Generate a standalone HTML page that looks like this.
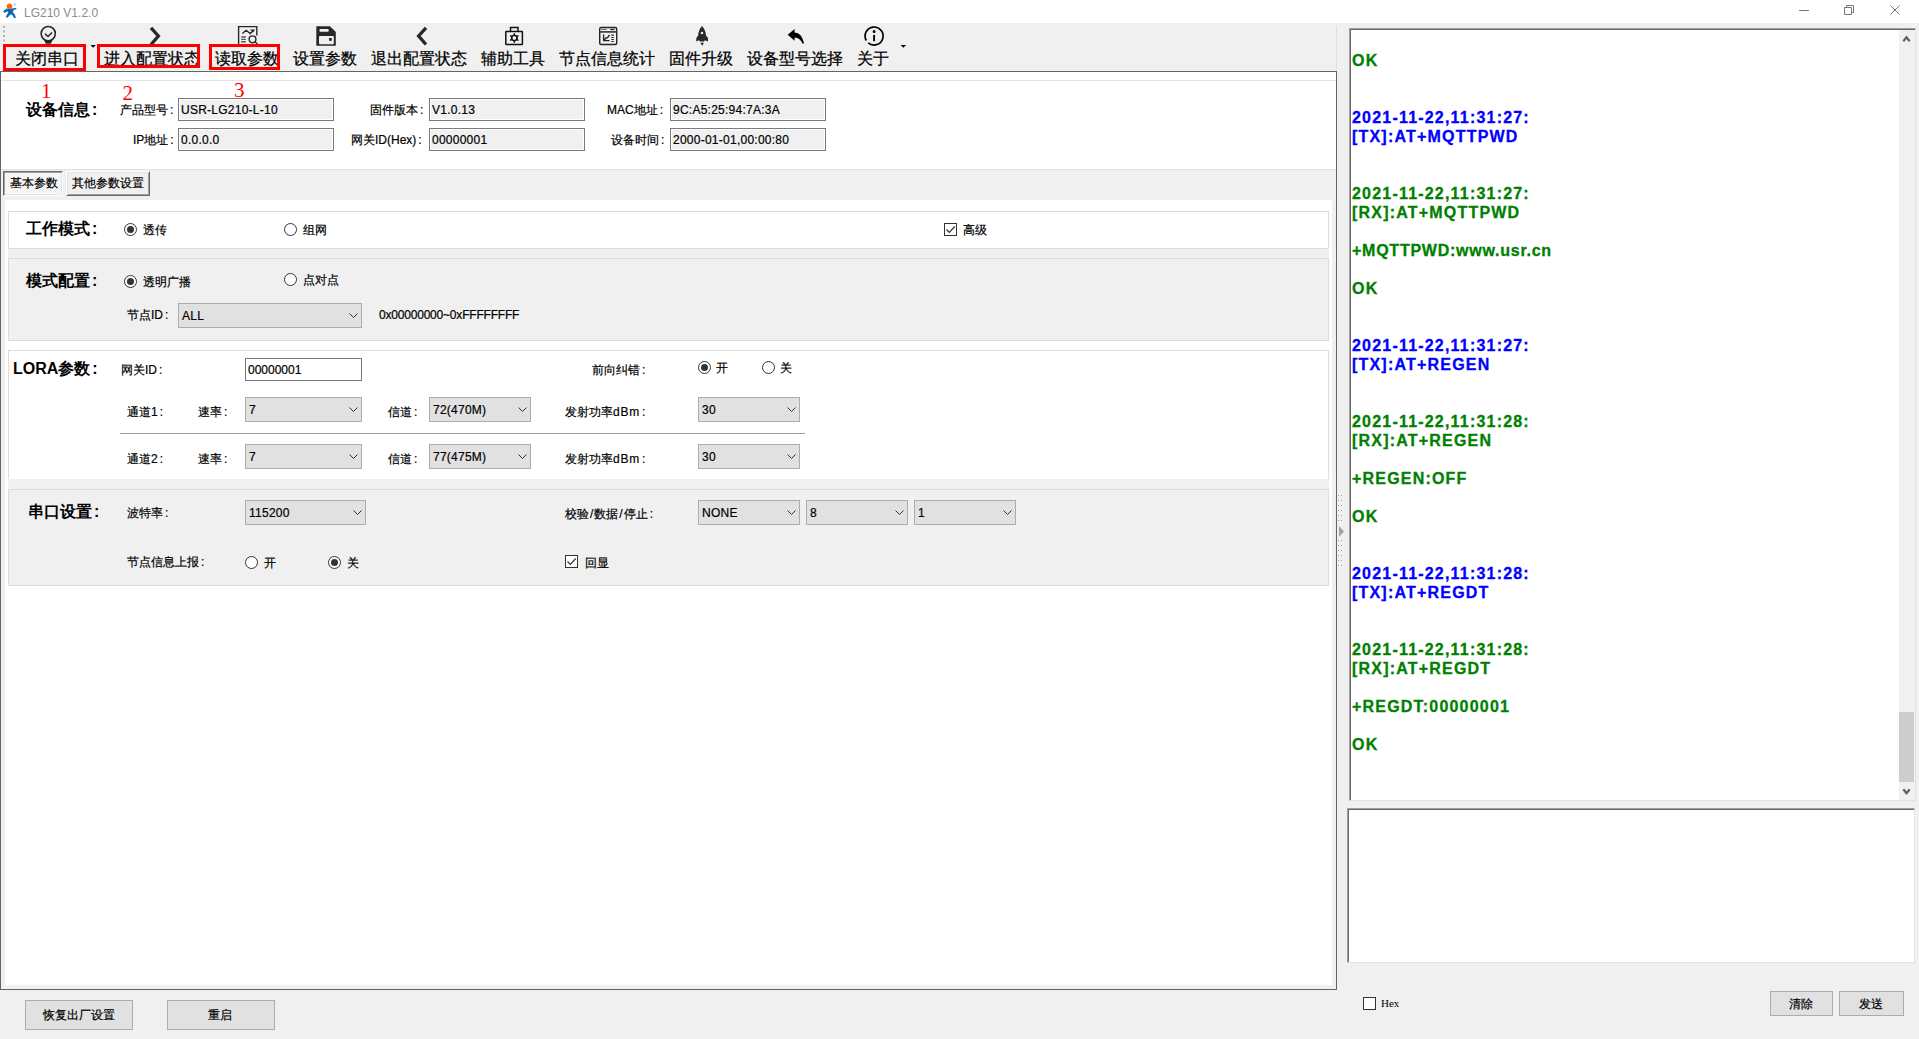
<!DOCTYPE html>
<html><head><meta charset="utf-8">
<style>
*{box-sizing:border-box;margin:0;padding:0}
html,body{width:1919px;height:1039px;overflow:hidden;background:#f0f0f0;font-family:"Liberation Sans",sans-serif;font-size:12px;color:#000;position:relative}
.a{position:absolute}
.t{position:absolute;white-space:nowrap;line-height:14px;font-size:12px;-webkit-text-stroke:0.2px #000}
.tb{position:absolute;white-space:nowrap;line-height:18px;font-size:16px;-webkit-text-stroke:0.25px #000}
.b{position:absolute;white-space:nowrap;font-weight:bold;font-size:16px;line-height:18px}
.rd{position:absolute;width:13px;height:13px;border:1px solid #333;border-radius:50%;background:#fff}
.rd.on::after{content:"";position:absolute;left:2px;top:2px;width:7px;height:7px;border-radius:50%;background:#333}
.ck{position:absolute;width:13px;height:13px;border:1px solid #333;background:#fff}
.ro{position:absolute;height:23px;border:1px solid #7a7a7a;background:#f0f0f0;box-shadow:inset 0 0 0 1px #fff}
.ro span{position:absolute;left:2px;top:4px;letter-spacing:0.25px;line-height:14px;font-size:12px;white-space:nowrap;-webkit-text-stroke:0.2px #000}
.cb{position:absolute;height:25px;border:1px solid #adadad;background:#e1e1e1}
.cb span{position:absolute;left:3px;top:5px;letter-spacing:0.25px;line-height:14px;font-size:12px;white-space:nowrap;-webkit-text-stroke:0.2px #000}
.cb svg{position:absolute;right:3px;top:9px}
.btn{position:absolute;border:1px solid #adadad;background:#e1e1e1;text-align:center}
.red{position:absolute;border:3px solid #f00}
.log{position:absolute;left:1352px;font-weight:bold;font-size:16px;line-height:19px;letter-spacing:1.2px;white-space:nowrap;-webkit-text-stroke:0.3px currentColor}
.c{font-style:normal;margin-left:2px}
.g{color:#008000}.bl{color:#0000ff}
</style></head><body>
<!-- title bar -->
<div class="a" style="left:0;top:0;width:1919px;height:23px;background:#fff"></div>
<svg class="a" style="left:0;top:0" width="22" height="22" viewBox="0 0 22 22">
<path d="M6.3 9.2 L12.8 8.9 L16 8.5 L16.2 8.6 L12.9 9.6 L12.6 12.6 Q14.8 14 15.3 17.6 L14.2 17.6 Q13.6 15 11.2 13.8 Q9 14.4 7.4 17.3 L6.5 17 Q7.3 14 8.8 12.6 L7.5 10.8 L4.3 12.4 L3.7 11.4 Z" fill="#0066b3" stroke="#0066b3" stroke-width="1" stroke-linejoin="round"/>
<circle cx="9.5" cy="6.35" r="2.75" fill="#ff6600"/>
<circle cx="14.8" cy="4.45" r="1.1" fill="#a8cbe8"/>
</svg>
<div class="t" style="left:24px;top:5.5px;color:#8c8c8c;-webkit-text-stroke:0">LG210 V1.2.0</div>
<svg class="a" style="left:1797px;top:4px" width="112" height="12" viewBox="0 0 112 12">
<path d="M2 6.5 H12" stroke="#777" stroke-width="1"/>
<path d="M47.5 3.5 h7 v7 h-7z M49.5 3.5 v-2 h7 v7 h-2" stroke="#777" stroke-width="1" fill="none"/>
<path d="M93.5 1.5 L102.5 10.5 M102.5 1.5 L93.5 10.5" stroke="#777" stroke-width="1"/>
</svg>

<!-- toolbar -->
<div id="toolbar">
<svg class="a" style="left:0;top:23px" width="920" height="48" viewBox="0 23 920 48">
<!-- grip -->
<g fill="#b4b4b4"><rect x="3" y="26" width="2" height="2"/><rect x="3" y="30.5" width="2" height="2"/><rect x="3" y="35" width="2" height="2"/><rect x="3" y="39.5" width="2" height="2"/></g>
<!-- icon1 pin check -->
<g transform="translate(36,23)" fill="none" stroke="#282828">
<circle cx="12.25" cy="10.6" r="7.1" stroke-width="1.6"/>
<path d="M9 10.9 L12 13.5 L16.1 9.5" stroke-width="1.6"/>
<path d="M7.2 15.6 Q12.2 19.8 17.4 15.6 L14.8 20.8 L9.8 20.8 Z" fill="#282828" stroke="none"/>
</g>
<!-- icon2 > -->
<path d="M151 27.8 L158.4 36 L151 44.5" fill="none" stroke="#282828" stroke-width="3.3"/>
<!-- icon3 report -->
<g transform="translate(234,23)" fill="none" stroke="#282828" stroke-width="1.4">
<path d="M4.6 21 V3.6 H22.8 V12.6"/>
<path d="M8.3 10.5 L12.2 7.3 L16.2 10.5 L19.5 7.5" />
<path d="M16.5 7.2 H20 L18.8 9" stroke-width="1.2"/>
<path d="M7.2 14 H11.8 M7.2 16.4 H11.8 M7.2 18.8 H11.8" stroke="#555"/>
<circle cx="18.5" cy="16.3" r="3.4"/>
<path d="M20.9 18.7 L23.5 21"/>
</g>
<!-- icon4 save -->
<g transform="translate(313,23)">
<path d="M3.3 3.2 H17 L22.8 9 V22.8 H3.3 Z" fill="#282828"/>
<rect x="6.5" y="6" width="9.2" height="2.8" rx="1" fill="#f0f0f0"/>
<rect x="6" y="13" width="14.8" height="8.3" rx="1" fill="#f0f0f0"/>
<rect x="16" y="15" width="2.8" height="2.8" fill="#282828"/>
</g>
<!-- icon5 < -->
<path d="M426 27.8 L418.6 36 L426 44.5" fill="none" stroke="#282828" stroke-width="3.3"/>
<!-- icon6 toolbox -->
<g transform="translate(500,23)" fill="none" stroke="#111" stroke-width="1.5">
<rect x="5.8" y="8.5" width="16.6" height="13" rx="0.5"/>
<path d="M10.5 8.3 V4.6 H18 V8.3"/>
<circle cx="14.3" cy="15" r="2.6" stroke-width="1.4"/>
<path d="M14.3 10.3 L15.2 12.6 L13.4 12.6 Z M14.3 19.7 L15.2 17.4 L13.4 17.4 Z M10.2 12.6 L12.6 13.2 L11.6 14.8 Z M18.4 12.6 L16 13.2 L17 14.8 Z M10.2 17.4 L12.6 16.8 L11.6 15.2 Z M18.4 17.4 L16 16.8 L17 15.2 Z" fill="#111" stroke-width="0.8"/>
</g>
<!-- icon7 stats -->
<g transform="translate(595,23)" fill="none" stroke="#222" stroke-width="1.4">
<rect x="4.7" y="4.5" width="17" height="17" rx="1.5"/>
<path d="M4.7 8.9 H21.7" stroke-width="1.8" stroke="#444"/>
<path d="M6.3 6.5 H11.5" stroke="#666" stroke-width="1"/>
<path d="M15.2 6.5 H19.6" stroke-width="1.2"/>
<path d="M8.6 11.6 V17.6 H14.6" stroke-width="1.3"/>
<path d="M8.6 17.6 L11 15 L12.6 14.6 L14.6 11.8" stroke-width="1.4"/>
<path d="M16.3 12.2 H18.8 M16.3 14.5 H18.8 M16.3 16.5 H18.8 M16.3 18.5 H18.8" stroke-width="1.2"/>
</g>
<!-- icon8 rocket -->
<g transform="translate(689,23)" fill="#282828">
<path d="M13 3 Q16.8 7 16.9 12.5 L19 15 L19 18.5 L16 17.2 L15 18.6 H11 L10 17.2 L7.3 18.5 L7.3 15 L9.2 12.5 Q9.3 7 13 3 Z"/>
<circle cx="13" cy="10" r="1.3" fill="#f0f0f0"/>
<path d="M11.3 19.8 H14.9 L13.2 22.8 Z"/>
</g>
<!-- icon9 reply -->
<g transform="translate(783,23)" fill="#000">
<path d="M4.7 11.8 L11.6 5.9 V9.4 Q18.8 9.7 20.9 19.8 Q20.8 21 19.7 20.7 Q17.2 14.8 11.6 14.4 V17.8 Z"/>
</g>
<!-- icon10 info -->
<g transform="translate(861,23)" fill="none" stroke="#000" stroke-width="1.7">
<path d="M5.3 17.5 A9 9 0 1 1 7.2 19.8"/>
<circle cx="13.1" cy="8.5" r="0.6" stroke-width="1.8"/>
<path d="M13.1 11.9 V18.2" stroke-width="1.9"/>
</g>
<path d="M900.7 45 H906 L903.35 47.8 Z" fill="#000"/>
<path d="M90.5 45 H95.8 L93.15 47.8 Z" fill="#000"/>
<line x1="0" y1="71.5" x2="1337" y2="71.5" stroke="#646464"/>
</svg>
<div class="tb" style="left:15px;top:49.5px">关闭串口</div>
<div class="tb" style="left:104px;top:49.5px">进入配置状态</div>
<div class="tb" style="left:215px;top:49.5px">读取参数</div>
<div class="tb" style="left:293px;top:49.5px">设置参数</div>
<div class="tb" style="left:371px;top:49.5px">退出配置状态</div>
<div class="tb" style="left:481px;top:49.5px">辅助工具</div>
<div class="tb" style="left:559px;top:49.5px">节点信息统计</div>
<div class="tb" style="left:669px;top:49.5px">固件升级</div>
<div class="tb" style="left:747px;top:49.5px">设备型号选择</div>
<div class="tb" style="left:857px;top:49.5px">关于</div>
<div class="red" style="left:3px;top:44px;width:83px;height:27px"></div>
<div class="red" style="left:97px;top:44px;width:103px;height:24px"></div>
<div class="red" style="left:209px;top:44px;width:71px;height:26px"></div>
</div>

<div class="a" style="left:1336px;top:26px;width:1px;height:45px;background:#dedede"></div>
<!-- left panel -->
<div class="a" style="left:0;top:71px;width:1337px;height:919px;border:1px solid #646464;background:#fff"></div>
<div class="a" style="left:1px;top:80px;width:1335px;height:1px;background:#e3e3e3"></div>
<div class="a" style="left:1px;top:169px;width:1335px;height:820px;background:#f0f0f0;border-top:1px solid #e3e3e3"></div>
<div class="a" style="left:5px;top:200px;width:1327px;height:785px;background:#fff"></div>
<!-- red numbers -->
<div class="a" style="left:41px;top:81px;font-family:'Liberation Serif',serif;font-size:21px;line-height:20px;color:#f00">1</div>
<div class="a" style="left:122.5px;top:83px;font-family:'Liberation Serif',serif;font-size:21px;line-height:20px;color:#f00">2</div>
<div class="a" style="left:234px;top:79.5px;font-family:'Liberation Serif',serif;font-size:21px;line-height:20px;color:#f00">3</div>
<!-- device info -->
<div class="b" style="left:26px;top:101px">设备信息<i class="c">:</i></div>
<div class="t" style="left:120px;top:103px">产品型号<i class="c">:</i></div>
<div class="ro" style="left:178px;top:98px;width:156px"><span>USR-LG210-L-10</span></div>
<div class="t" style="left:133px;top:133px">IP地址<i class="c">:</i></div>
<div class="ro" style="left:178px;top:128px;width:156px"><span>0.0.0.0</span></div>
<div class="t" style="left:370px;top:103px">固件版本<i class="c">:</i></div>
<div class="ro" style="left:429px;top:98px;width:156px"><span>V1.0.13</span></div>
<div class="t" style="left:351px;top:133px">网关ID(Hex)<i class="c">:</i></div>
<div class="ro" style="left:429px;top:128px;width:156px"><span>00000001</span></div>
<div class="t" style="left:607px;top:103px">MAC地址<i class="c">:</i></div>
<div class="ro" style="left:670px;top:98px;width:156px"><span>9C:A5:25:94:7A:3A</span></div>
<div class="t" style="left:611px;top:133px">设备时间<i class="c">:</i></div>
<div class="ro" style="left:670px;top:128px;width:156px"><span>2000-01-01,00:00:80</span></div>
<!-- tabs -->
<div class="a" style="left:3px;top:171px;width:60px;height:25px;border-top:1px solid #696969;border-left:1px solid #696969;border-right:1px solid #fff;border-bottom:1px solid #fff;box-shadow:inset 1px 1px 0 #a0a0a0,inset -1px -1px 0 #e3e3e3;background:repeating-conic-gradient(#fff 0 25%,#ececec 0 50%) 0 0/2px 2px"></div>
<div class="t" style="left:10px;top:176px">基本参数</div>
<div class="a" style="left:66px;top:171px;width:84px;height:25px;border-top:1px solid #fff;border-left:1px solid #fff;border-right:1px solid #696969;border-bottom:1px solid #696969;box-shadow:inset 1px 1px 0 #e3e3e3,inset -1px -1px 0 #a0a0a0;background:#f0f0f0"></div>
<div class="t" style="left:72px;top:176px">其他参数设置</div>
<!-- sec1 -->
<div class="a" style="left:8px;top:211px;width:1321px;height:38px;border:1px solid #dcdcdc;background:#fff"></div>
<div class="b" style="left:26px;top:220px">工作模式<i class="c">:</i></div>
<div class="rd on" style="left:124px;top:223px"></div><div class="t" style="left:143px;top:223px">透传</div>
<div class="rd" style="left:284px;top:223px"></div><div class="t" style="left:303px;top:223px">组网</div>
<div class="ck" style="left:944px;top:223px"><svg width="11" height="11" style="position:absolute;left:0;top:0"><path d="M1.5 5.5 L4.3 8.3 L9.8 2.5" stroke="#333" stroke-width="1.2" fill="none"/></svg></div><div class="t" style="left:963px;top:223px">高级</div>
<!-- sec2 -->
<div class="a" style="left:8px;top:249px;width:1321px;height:92px;background:#f0f0f0"></div>
<div class="a" style="left:8px;top:258px;width:1321px;height:83px;border:1px solid #dcdcdc;background:#f0f0f0"></div>
<div class="b" style="left:26px;top:272px">模式配置<i class="c">:</i></div>
<div class="rd on" style="left:124px;top:275px"></div><div class="t" style="left:143px;top:275px">透明广播</div>
<div class="rd" style="left:284px;top:273px"></div><div class="t" style="left:303px;top:273px">点对点</div>
<div class="t" style="left:127px;top:308px">节点ID<i class="c">:</i></div>
<div class="cb" style="left:178px;top:303px;width:184px"><span>ALL</span><svg width="9" height="6"><path d="M0.5 0.5 L4.5 4.5 L8.5 0.5" stroke="#333" fill="none"/></svg></div>
<div class="t" style="left:379px;top:308px;letter-spacing:-0.2px">0x00000000~0xFFFFFFFF</div>
<!-- sec3 LORA -->
<div class="a" style="left:8px;top:350px;width:1321px;height:130px;border:1px solid #dcdcdc;background:#fff"></div>
<div class="b" style="left:13px;top:360px">LORA参数<i class="c">:</i></div>
<div class="t" style="left:121px;top:363px">网关ID<i class="c">:</i></div>
<div class="a" style="left:245px;top:358px;width:117px;height:23px;border:1px solid #7a7a7a;background:#fff"><span class="t" style="left:2px;top:4px">00000001</span></div>
<div class="t" style="left:592px;top:363px">前向纠错<i class="c">:</i></div>
<div class="rd on" style="left:698px;top:361px"></div><div class="t" style="left:716px;top:361px">开</div>
<div class="rd" style="left:762px;top:361px"></div><div class="t" style="left:780px;top:361px">关</div>
<div class="t" style="left:127px;top:405px">通道1<i class="c">:</i></div>
<div class="t" style="left:198px;top:405px">速率<i class="c">:</i></div>
<div class="cb" style="left:245px;top:397px;width:117px"><span>7</span><svg width="9" height="6"><path d="M0.5 0.5 L4.5 4.5 L8.5 0.5" stroke="#333" fill="none"/></svg></div>
<div class="t" style="left:388px;top:405px">信道<i class="c">:</i></div>
<div class="cb" style="left:429px;top:397px;width:102px"><span>72(470M)</span><svg width="9" height="6"><path d="M0.5 0.5 L4.5 4.5 L8.5 0.5" stroke="#333" fill="none"/></svg></div>
<div class="t" style="left:565px;top:405px">发射功率<span style="letter-spacing:0.8px">dBm</span><i class="c">:</i></div>
<div class="cb" style="left:698px;top:397px;width:102px"><span>30</span><svg width="9" height="6"><path d="M0.5 0.5 L4.5 4.5 L8.5 0.5" stroke="#333" fill="none"/></svg></div>
<div class="a" style="left:120px;top:433px;width:685px;height:1px;background:#a0a0a0"></div>
<div class="t" style="left:127px;top:452px">通道2<i class="c">:</i></div>
<div class="t" style="left:198px;top:452px">速率<i class="c">:</i></div>
<div class="cb" style="left:245px;top:444px;width:117px"><span>7</span><svg width="9" height="6"><path d="M0.5 0.5 L4.5 4.5 L8.5 0.5" stroke="#333" fill="none"/></svg></div>
<div class="t" style="left:388px;top:452px">信道<i class="c">:</i></div>
<div class="cb" style="left:429px;top:444px;width:102px"><span>77(475M)</span><svg width="9" height="6"><path d="M0.5 0.5 L4.5 4.5 L8.5 0.5" stroke="#333" fill="none"/></svg></div>
<div class="t" style="left:565px;top:452px">发射功率<span style="letter-spacing:0.8px">dBm</span><i class="c">:</i></div>
<div class="cb" style="left:698px;top:444px;width:102px"><span>30</span><svg width="9" height="6"><path d="M0.5 0.5 L4.5 4.5 L8.5 0.5" stroke="#333" fill="none"/></svg></div>
<!-- sec4 serial -->
<div class="a" style="left:8px;top:479px;width:1321px;height:107px;background:#f0f0f0"></div>
<div class="a" style="left:8px;top:489px;width:1321px;height:97px;border:1px solid #dcdcdc;background:#f0f0f0"></div>
<div class="b" style="left:28px;top:503px">串口设置<i class="c">:</i></div>
<div class="t" style="left:127px;top:506px">波特率<i class="c">:</i></div>
<div class="cb" style="left:245px;top:500px;width:121px"><span>115200</span><svg width="9" height="6"><path d="M0.5 0.5 L4.5 4.5 L8.5 0.5" stroke="#333" fill="none"/></svg></div>
<div class="t" style="left:565px;top:507px">校验<span style="margin:0 1px">/</span>数据<span style="margin:0 1px">/</span>停止<i class="c">:</i></div>
<div class="cb" style="left:698px;top:500px;width:102px"><span>NONE</span><svg width="9" height="6"><path d="M0.5 0.5 L4.5 4.5 L8.5 0.5" stroke="#333" fill="none"/></svg></div>
<div class="cb" style="left:806px;top:500px;width:102px"><span>8</span><svg width="9" height="6"><path d="M0.5 0.5 L4.5 4.5 L8.5 0.5" stroke="#333" fill="none"/></svg></div>
<div class="cb" style="left:914px;top:500px;width:102px"><span>1</span><svg width="9" height="6"><path d="M0.5 0.5 L4.5 4.5 L8.5 0.5" stroke="#333" fill="none"/></svg></div>
<div class="t" style="left:127px;top:555px">节点信息上报<i class="c">:</i></div>
<div class="rd" style="left:245px;top:556px"></div><div class="t" style="left:264px;top:556px">开</div>
<div class="rd on" style="left:328px;top:556px"></div><div class="t" style="left:347px;top:556px">关</div>
<div class="ck" style="left:565px;top:555px"><svg width="11" height="11" style="position:absolute;left:0;top:0"><path d="M1.5 5.5 L4.3 8.3 L9.8 2.5" stroke="#333" stroke-width="1.2" fill="none"/></svg></div><div class="t" style="left:585px;top:556px">回显</div>
<!-- splitter -->
<svg class="a" style="left:1337px;top:490px" width="10" height="80" viewBox="0 0 10 80">
<g fill="#a0a0a0">
<rect x="1" y="5" width="1" height="1"/><rect x="4" y="5" width="1" height="1"/>
<rect x="1" y="10" width="1" height="1"/><rect x="4" y="10" width="1" height="1"/>
<rect x="1" y="15" width="1" height="1"/><rect x="4" y="15" width="1" height="1"/>
<rect x="1" y="20" width="1" height="1"/><rect x="4" y="20" width="1" height="1"/>
<rect x="1" y="25" width="1" height="1"/><rect x="4" y="25" width="1" height="1"/>
<rect x="1" y="30" width="1" height="1"/><rect x="4" y="30" width="1" height="1"/>
<path d="M2 36 L7 41.5 L2 47 Z"/>
<rect x="1" y="50" width="1" height="1"/><rect x="4" y="50" width="1" height="1"/>
<rect x="1" y="55" width="1" height="1"/><rect x="4" y="55" width="1" height="1"/>
<rect x="1" y="60" width="1" height="1"/><rect x="4" y="60" width="1" height="1"/>
<rect x="1" y="65" width="1" height="1"/><rect x="4" y="65" width="1" height="1"/>
<rect x="1" y="70" width="1" height="1"/><rect x="4" y="70" width="1" height="1"/>
<rect x="1" y="75" width="1" height="1"/><rect x="4" y="75" width="1" height="1"/>
</g></svg>
<!-- bottom buttons -->
<div class="btn" style="left:25px;top:1000px;width:108px;height:30px"><span class="t" style="left:17px;top:7px">恢复出厂设置</span></div>
<div class="btn" style="left:167px;top:1000px;width:108px;height:30px"><span class="t" style="left:40px;top:7px">重启</span></div>

<!-- right panel -->
<div class="a" style="left:1349px;top:28px;width:567px;height:773px;background:#fff;border-top:1px solid #a0a0a0;border-left:1px solid #a0a0a0;border-right:1px solid #e3e3e3;border-bottom:1px solid #e3e3e3;box-shadow:inset 1px 1px 0 #696969"></div>
<div class="a" style="left:1899px;top:30px;width:16px;height:770px;background:#f0f0f0"></div>
<div class="a" style="left:1899px;top:712px;width:15px;height:70px;background:#cdcdcd"></div>
<svg class="a" style="left:1899px;top:30px" width="16" height="770" viewBox="0 0 16 770">
<path d="M4.3 11.3 L7.5 7.3 L10.7 11.3" stroke="#606060" stroke-width="2.2" fill="none"/>
<path d="M4.3 759.3 L7.5 763.3 L10.7 759.3" stroke="#606060" stroke-width="2.2" fill="none"/>
</svg>
<div class="log g" style="top:50.5px">OK</div>
<div class="log bl" style="top:107.5px">2021-11-22,11:31:27:</div>
<div class="log bl" style="top:126.5px">[TX]:AT+MQTTPWD</div>
<div class="log g" style="top:183.5px">2021-11-22,11:31:27:</div>
<div class="log g" style="top:202.5px">[RX]:AT+MQTTPWD</div>
<div class="log g" style="top:240.5px;letter-spacing:0.75px">+MQTTPWD:www.usr.cn</div>
<div class="log g" style="top:278.5px">OK</div>
<div class="log bl" style="top:335.5px">2021-11-22,11:31:27:</div>
<div class="log bl" style="top:354.5px">[TX]:AT+REGEN</div>
<div class="log g" style="top:411.5px">2021-11-22,11:31:28:</div>
<div class="log g" style="top:430.5px">[RX]:AT+REGEN</div>
<div class="log g" style="top:468.5px">+REGEN:OFF</div>
<div class="log g" style="top:506.5px">OK</div>
<div class="log bl" style="top:563.5px">2021-11-22,11:31:28:</div>
<div class="log bl" style="top:582.5px">[TX]:AT+REGDT</div>
<div class="log g" style="top:639.5px">2021-11-22,11:31:28:</div>
<div class="log g" style="top:658.5px">[RX]:AT+REGDT</div>
<div class="log g" style="top:696.5px">+REGDT:00000001</div>
<div class="log g" style="top:734.5px">OK</div>
<div class="a" style="left:1347px;top:808px;width:568px;height:155px;background:#fff;border-top:1px solid #a0a0a0;border-left:1px solid #a0a0a0;border-right:1px solid #e3e3e3;border-bottom:1px solid #e3e3e3;box-shadow:inset 1px 1px 0 #696969"></div>
<div class="a" style="left:1363px;top:997px;width:13px;height:13px;border:1px solid #333;background:#fff"></div>
<div class="a" style="left:1381px;top:996px;font-family:'Liberation Serif',serif;font-size:11px;line-height:14px">Hex</div>
<div class="btn" style="left:1770px;top:991px;width:63px;height:25px"><span class="t" style="left:18px;top:5px">清除</span></div>
<div class="btn" style="left:1839px;top:991px;width:65px;height:25px"><span class="t" style="left:19px;top:5px">发送</span></div>
</body></html>
